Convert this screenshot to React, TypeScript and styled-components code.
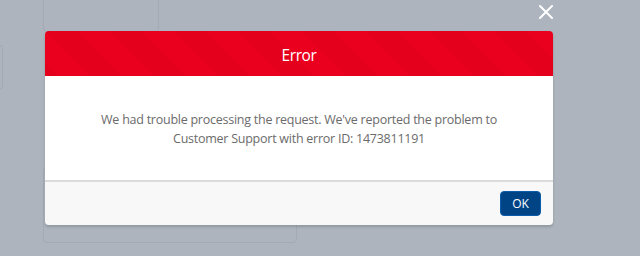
import React from "react";
import styled, { createGlobalStyle } from "styled-components";

const Global = createGlobalStyle`
  html, body { margin: 0; padding: 0; }
  body { background: #adb4bd; font-family: "Open Sans", "Noto Sans", sans-serif; }
`;

const Page = styled.div`
  position: relative;
  width: 640px;
  height: 256px;
  overflow: hidden;
  background: #adb4bd;
`;

const Backdrop = styled.div`
  display: grid;
  grid-template-columns: 3px 1fr;
  column-gap: 40px;
`;

const SideTab = styled.div`
  margin-top: 45px;
  height: 42px;
  border: 1px solid #a3aab3;
  border-left: none;
  border-radius: 0 3px 3px 0;
`;

const Column = styled.div`
  display: flex;
  flex-direction: column;
`;

const TopCard = styled.div`
  width: 114px;
  height: 40px;
  margin-top: -10px;
  border: 1px solid #a3aab3;
  border-radius: 4px;
`;

const BottomCard = styled.div`
  margin-top: 135px;
  width: 252px;
  height: 74px;
  border: 1px solid #a3aab3;
  border-radius: 4px;
`;

const CloseButton = styled.button`
  position: absolute;
  top: 4px;
  left: 538px;
  width: 16px;
  height: 16px;
  padding: 0;
  border: none;
  background: transparent;
  display: flex;
  align-items: center;
  justify-content: center;
`;

const Modal = styled.div`
  position: absolute;
  left: 45px;
  top: 31px;
  width: 508px;
  border-radius: 4px;
  overflow: hidden;
  box-shadow: 0 2px 3px rgba(0, 0, 0, 0.16);
  display: flex;
  flex-direction: column;
`;

const Header = styled.div`
  height: 45px;
  box-sizing: border-box;
  padding-top: 2px;
  display: flex;
  align-items: center;
  justify-content: center;
  background-color: #ea001e;
  background-image: linear-gradient(
    45deg,
    rgba(0, 0, 0, 0.025) 25%,
    transparent 25%,
    transparent 50%,
    rgba(0, 0, 0, 0.025) 50%,
    rgba(0, 0, 0, 0.025) 75%,
    transparent 75%,
    transparent
  );
  background-size: 64px 64px;
`;

const Title = styled.h2`
  margin: 0;
  color: #ffffff;
  font-size: 15.5px;
  letter-spacing: -0.4px;
  font-weight: 400;
  line-height: 20px;
`;

const Body = styled.div`
  height: 104px;
  background: #ffffff;
  display: flex;
  align-items: center;
  justify-content: center;
  text-align: center;
  box-sizing: border-box;
  padding: 2px 16px 0;
`;

const Message = styled.p`
  margin: 0;
  color: #6b6b6b;
  font-size: 12.5px;
  letter-spacing: -0.25px;
  line-height: 19px;
`;

const Footer = styled.div`
  height: 45px;
  box-sizing: border-box;
  border-top: 2px solid #dddbda;
  background: #f8f8f8;
  display: flex;
  align-items: center;
  justify-content: flex-end;
  padding: 0 12px;
`;

const OkButton = styled.button`
  width: 41px;
  height: 25px;
  padding: 0;
  border: 1px solid #0b5cab;
  border-radius: 4px;
  background: #014486;
  color: #ffffff;
  font-family: "Open Sans", "Noto Sans", sans-serif;
  font-size: 12px;
  line-height: 23px;
`;

export default function App() {
  return (
    <Page>
      <Global />
      <Backdrop>
        <SideTab />
        <Column>
          <TopCard />
          <BottomCard />
        </Column>
      </Backdrop>
      <CloseButton aria-label="Close">
        <svg width="14" height="14" viewBox="0 0 14 14">
          <path d="M1 1 L13 13 M13 1 L1 13" stroke="#ffffff" strokeWidth="2" strokeLinecap="round" />
        </svg>
      </CloseButton>
      <Modal role="dialog">
        <Header>
          <Title>Error</Title>
        </Header>
        <Body>
          <Message>
            We had trouble processing the request. We've reported the problem to
            <br />
            Customer Support with error ID: 1473811191
          </Message>
        </Body>
        <Footer>
          <OkButton>OK</OkButton>
        </Footer>
      </Modal>
    </Page>
  );
}
